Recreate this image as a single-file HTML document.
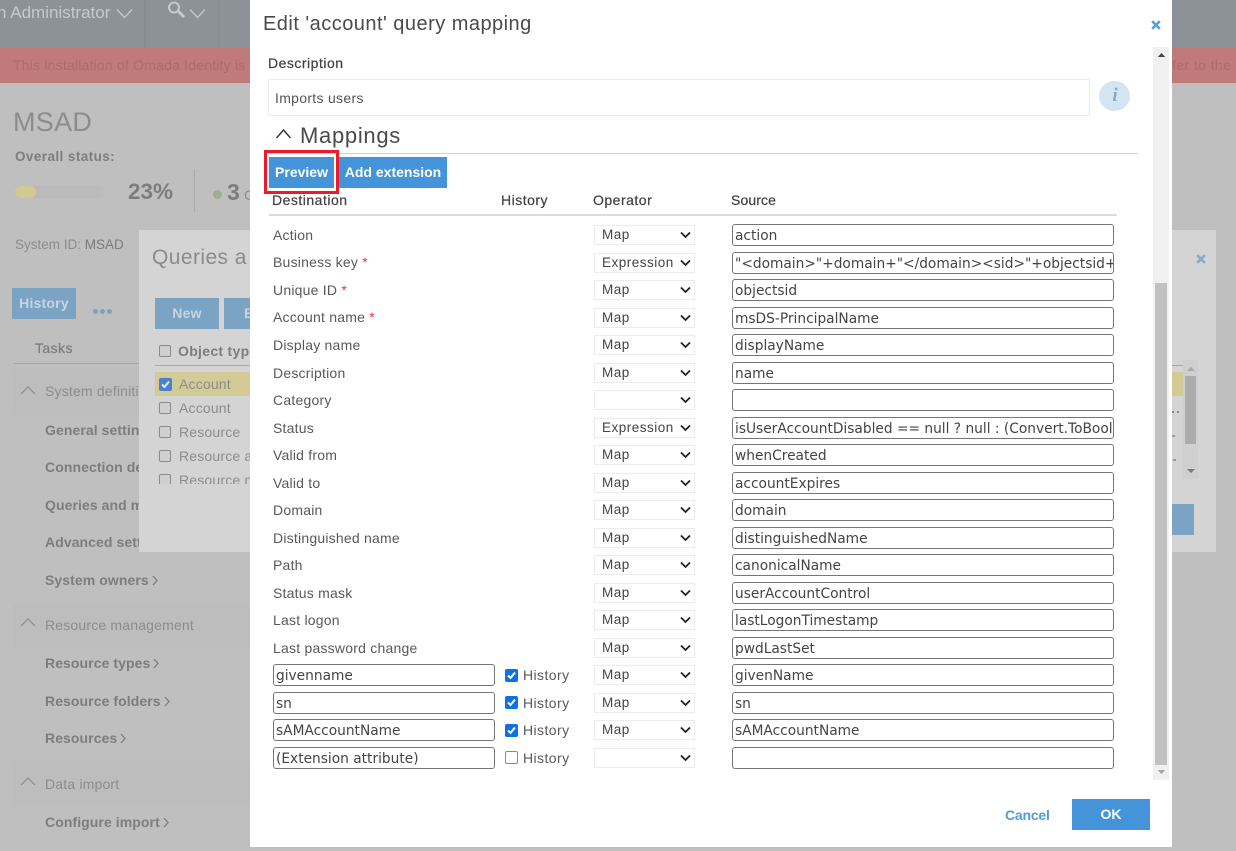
<!DOCTYPE html>
<html><head><meta charset="utf-8"><title>Edit query mapping</title>
<style>
html,body{margin:0;padding:0}
body{width:1236px;height:851px;position:relative;overflow:hidden;background:#bfbfbf;font-family:"Liberation Sans",sans-serif;font-size:14px;color:#444}
.a{position:absolute;white-space:nowrap}
.t{position:absolute;white-space:nowrap;line-height:20px;letter-spacing:.42px}
.b{font-weight:bold}
.g{color:#7d7d7d;letter-spacing:.08px}
.l{color:#8c8c8c;letter-spacing:.18px}
.g svg{margin-left:3px;vertical-align:-1px}
.r{position:absolute;left:273px;color:#595959;line-height:20px;letter-spacing:.22px;white-space:nowrap}
.r i{color:#e8343a;font-style:normal}
.i{position:absolute;box-sizing:border-box;height:22px;border:1px solid #767676;border-radius:3px;background:#fff;color:#444;font:13.75px/22px "DejaVu Sans",sans-serif;padding-left:2px;overflow:hidden;white-space:nowrap}
.s{left:732px;width:382px}
.d{left:273px;width:222px}
.o{position:absolute;left:594px;width:101px;height:20px;box-sizing:border-box;border:1px solid #ececec;background:#fff;color:#444;font:13.5px/18px "Liberation Sans",sans-serif;letter-spacing:.5px;padding-left:7px}
.o svg{position:absolute;left:85px;top:5px}
.c{position:absolute;left:505px;width:13px;height:13px;box-sizing:border-box;border-radius:2px;background:#0f6fe6}
.c svg{display:block}
.u{background:#fff;border:1px solid #8a8a8a}
.h{position:absolute;left:523px;color:#595959;line-height:20px;letter-spacing:.42px}
.k{position:absolute;width:12px;height:12px;box-sizing:border-box;border:1px solid #8a8a8a;border-radius:2px;background:#cfcfcf}
.bt{position:absolute;background:#7aa3c4;color:#c7d5e0;font-weight:bold;text-align:center;line-height:31px;letter-spacing:.2px}
.bm{position:absolute;background:#4394d8;color:#fff;font-weight:bold;text-align:center;height:31px;line-height:31px;top:157px;letter-spacing:0}
.hd{color:#404040;letter-spacing:.5px;-webkit-text-stroke:.2px #404040}
</style></head><body>

<!-- background page -->
<div class="a" style="left:0;top:0;width:1236px;height:48px;background:#8d9299"></div>
<div class="a" style="left:0;top:48px;width:1236px;height:35px;background:#c07a7a"></div>
<div class="a" style="left:144px;top:0;width:2px;height:48px;background:#888d94"></div>
<div class="a" style="left:218px;top:0;width:2px;height:48px;background:#888d94"></div>
<div class="t" style="left:-3px;top:3px;font-size:17px;color:#c6c9cd;letter-spacing:0">n Administrator</div>
<svg class="a" style="left:116px;top:8px" width="18" height="11" fill="none" stroke="#c6c9cd" stroke-width="1.3"><path d="M1 1.5l7.5 8 7.5-8"/></svg>
<svg class="a" style="left:165px;top:0" width="22" height="20" fill="none" stroke="#c6c9cd"><circle cx="9" cy="7.5" r="5" stroke-width="2"/><path d="M13 11l6 6" stroke-width="3"/></svg>
<svg class="a" style="left:189px;top:8px" width="18" height="11" fill="none" stroke="#c6c9cd" stroke-width="1.3"><path d="M1 1.5l7.5 8 7.5-8"/></svg>
<div class="t" style="left:13px;top:55px;color:#a86d6d;letter-spacing:.2px">This installation of Omada Identity is</div>
<div class="t" style="left:1172px;top:55px;color:#a86d6d;letter-spacing:.4px">fer to the</div>
<div class="t" style="left:13px;top:106px;font-size:27px;line-height:32px;color:#8c8c8c;letter-spacing:.3px">MSAD</div>
<div class="t b" style="left:15px;top:147px;font-size:13.5px;color:#7d7d7d">Overall status:</div>
<div class="a" style="left:15px;top:186px;width:90px;height:12px;border-radius:6px;background:#bababa"></div>
<div class="a" style="left:15px;top:186px;width:21px;height:12px;border-radius:6px;background:#d2ca90"></div>
<div class="t b" style="left:128px;top:180px;font-size:22.5px;line-height:24px;color:#7d7d7d;letter-spacing:0">23%</div>
<div class="a" style="left:194px;top:169px;width:1px;height:43px;background:#a9a9a9"></div>
<div class="a" style="left:213px;top:190px;width:9px;height:9px;border-radius:50%;background:#9cb08f"></div>
<div class="t b" style="left:227px;top:180px;font-size:23px;line-height:24px;color:#7d7d7d;letter-spacing:0">3</div>
<div class="t" style="left:244px;top:185px;color:#8c8c8c">G</div>
<div class="t" style="left:15px;top:235px;color:#8c8c8c;font-size:13.5px;letter-spacing:0">System ID: <span style="color:#7b7b7b">MSAD</span></div>

<div class="bt" style="left:12px;top:288px;width:64px;height:31px">History</div>
<div class="a" style="left:93px;top:309px;width:5px;height:5px;border-radius:50%;background:#7aa3c4"></div>
<div class="a" style="left:100px;top:309px;width:5px;height:5px;border-radius:50%;background:#7aa3c4"></div>
<div class="a" style="left:107px;top:309px;width:5px;height:5px;border-radius:50%;background:#7aa3c4"></div>
<div class="t" style="left:35px;top:338px;color:#7d7d7d;-webkit-text-stroke:.25px #7d7d7d">Tasks</div>
<div class="a" style="left:13px;top:363px;width:126px;height:1px;background:#a9a9a9"></div>

<div class="a" style="left:13px;top:369px;width:126px;height:46px;background:#bdbdbd"></div>
<div class="a" style="left:13px;top:604px;width:237px;height:44px;background:#bdbdbd"></div>
<div class="a" style="left:13px;top:761px;width:237px;height:44px;background:#bdbdbd"></div>
<svg class="a" style="left:20px;top:385px" width="16" height="10" fill="none" stroke="#8e8e8e" stroke-width="1.2"><path d="M1 9l7-7 7 7"/></svg>
<svg class="a" style="left:20px;top:617px" width="16" height="10" fill="none" stroke="#8e8e8e" stroke-width="1.2"><path d="M1 9l7-7 7 7"/></svg>
<svg class="a" style="left:20px;top:776px" width="16" height="10" fill="none" stroke="#8e8e8e" stroke-width="1.2"><path d="M1 9l7-7 7 7"/></svg>
<div class="t l" style="left:45px;top:381px">System definition</div>
<div class="t l" style="left:45px;top:615px">Resource management</div>
<div class="t l" style="left:45px;top:774px">Data import</div>
<div class="t b g" style="left:45px;top:420px">General settings</div>
<div class="t b g" style="left:45px;top:457px">Connection details</div>
<div class="t b g" style="left:45px;top:495px">Queries and mappings</div>
<div class="t b g" style="left:45px;top:532px">Advanced settings</div>
<div class="t b g" style="left:45px;top:570px">System owners<svg width="6" height="11" fill="none" stroke="#7d7d7d" stroke-width="1.3"><path d="M1 1l4 4.5-4 4.5"/></svg></div>
<div class="t b g" style="left:45px;top:653px">Resource types<svg width="6" height="11" fill="none" stroke="#7d7d7d" stroke-width="1.3"><path d="M1 1l4 4.5-4 4.5"/></svg></div>
<div class="t b g" style="left:45px;top:691px">Resource folders<svg width="6" height="11" fill="none" stroke="#7d7d7d" stroke-width="1.3"><path d="M1 1l4 4.5-4 4.5"/></svg></div>
<div class="t b g" style="left:45px;top:728px">Resources<svg width="6" height="11" fill="none" stroke="#7d7d7d" stroke-width="1.3"><path d="M1 1l4 4.5-4 4.5"/></svg></div>
<div class="t b g" style="left:45px;top:812px">Configure import<svg width="6" height="11" fill="none" stroke="#7d7d7d" stroke-width="1.3"><path d="M1 1l4 4.5-4 4.5"/></svg></div>

<!-- second dialog -->
<div class="a" style="left:139px;top:230px;width:1077px;height:322px;background:#d4d4d4"></div>
<div class="t" style="left:152px;top:245px;font-size:21px;line-height:26px;color:#8a8a8a">Queries a</div>
<div class="bt" style="left:155px;top:298px;width:64px;height:31px">New</div>
<div class="bt" style="left:224px;top:298px;width:40px;height:31px;text-align:left;text-indent:20px">E</div>
<div class="k" style="left:159px;top:345px"></div>
<div class="t b" style="left:178px;top:341px;color:#7d7d7d;letter-spacing:.3px">Object type</div>
<div class="a" style="left:155px;top:365px;width:100px;height:1px;background:#aaa"></div>
<div class="a" style="left:155px;top:372px;width:100px;height:24px;background:#d2cb96"></div>
<div class="a" style="left:159px;top:378px;width:13px;height:13px;border-radius:2px;background:#4a80d0"><svg width="13" height="13" fill="none" stroke="#e8e8e8" stroke-width="2"><path d="M3 6.5l2.5 2.5 4.5-5.5"/></svg></div>
<div class="t l" style="left:179px;top:374px">Account</div>
<div class="k" style="left:159px;top:402px"></div><div class="t l" style="left:179px;top:398px">Account</div>
<div class="k" style="left:159px;top:426px"></div><div class="t l" style="left:179px;top:422px">Resource</div>
<div class="k" style="left:159px;top:450px"></div><div class="t l" style="left:179px;top:446px">Resource a</div>
<div class="a" style="left:155px;top:470px;width:100px;height:14px;overflow:hidden"><div class="k" style="left:4px;top:4px"></div><div class="t l" style="left:24px;top:0">Resource n</div></div>

<div class="a" style="left:1172px;top:365px;width:11px;height:1px;background:#aaa"></div>
<div class="a" style="left:1172px;top:372px;width:11px;height:24px;background:#d2cb96"></div>
<div class="a" style="left:1172px;top:411px;width:7px;height:2px;border-left:2px dotted #888;border-right:2px dotted #888;box-sizing:border-box"></div>
<div class="a" style="left:1172px;top:435px;width:3px;height:2px;background:#999"></div>
<div class="a" style="left:1173px;top:459px;width:3px;height:2px;background:#999"></div>
<div class="a" style="left:1183px;top:360px;width:15px;height:119px;background:#cfcfcf"></div>
<div class="a" style="left:1185px;top:376px;width:11px;height:68px;background:#acacac"></div>
<svg class="a" style="left:1186px;top:366px" width="10" height="6"><path d="M1 5l4-4 4 4z" fill="#a9a9a9"/></svg>
<svg class="a" style="left:1186px;top:468px" width="10" height="6"><path d="M1 1l4 4 4-4z" fill="#777"/></svg>
<div class="a" style="left:1172px;top:504px;width:22px;height:31px;background:#7aa3c4"></div>
<svg class="a" style="left:1196px;top:254px" width="10" height="10" stroke="#86aac8" stroke-width="2.6"><path d="M1.2 1.2l7.6 7.6M8.8 1.2l-7.6 7.6"/></svg>

<!-- modal -->
<div class="a" style="left:250px;top:0;width:922px;height:847px;background:#fff"></div>
<div class="t" style="left:263px;top:11px;font-size:20px;line-height:26px;color:#4a4a4a;letter-spacing:.47px">Edit 'account' query mapping</div>
<svg class="a" style="left:1151px;top:20px" width="10" height="10" stroke="#5c9fd4" stroke-width="2.6"><path d="M1.2 1.2l7.6 7.6M8.8 1.2l-7.6 7.6"/></svg>

<div class="t hd" style="left:268px;top:53px">Description</div>
<div class="a" style="left:268px;top:79px;width:822px;height:37px;box-sizing:border-box;border:1px solid #ebebeb"></div>
<div class="t" style="left:275px;top:88px;color:#555;letter-spacing:.3px">Imports users</div>
<div class="a" style="left:1099px;top:81px;width:31px;height:30px;border-radius:50%;background:#d3e5f3"></div>
<div class="a" style="left:1109px;top:84px;width:12px;text-align:center;font:italic bold 19px/24px 'Liberation Serif',serif;color:#8aa9c2">i</div>

<svg class="a" style="left:275px;top:128px" width="17" height="12" fill="none" stroke="#333" stroke-width="1.4"><path d="M1.5 10l7-8 7 8"/></svg>
<div class="t" style="left:300px;top:122px;font-size:22px;line-height:28px;color:#4a4a4a;letter-spacing:.7px">Mappings</div>
<div class="a" style="left:268px;top:153px;width:870px;height:1px;background:#d3d3d3"></div>

<div class="bm" style="left:269px;width:65px">Preview</div>
<div class="bm" style="left:339px;width:108px">Add extension</div>
<div class="a" style="left:264px;top:150px;width:75px;height:44px;box-sizing:border-box;border:3px solid #ea1c2c"></div>

<div class="t hd" style="left:272px;top:190px">Destination</div>
<div class="t hd" style="left:501px;top:190px">History</div>
<div class="t hd" style="left:593px;top:190px">Operator</div>
<div class="t hd" style="left:731px;top:190px;letter-spacing:.1px">Source</div>
<div class="a" style="left:269px;top:214px;width:848px;height:2px;background:#dcdcdc"></div>

<div class="r" style="top:225px">Action</div>
<div class="r" style="top:252px">Business key <i>*</i></div>
<div class="r" style="top:280px">Unique ID <i>*</i></div>
<div class="r" style="top:307px">Account name <i>*</i></div>
<div class="r" style="top:335px">Display name</div>
<div class="r" style="top:363px">Description</div>
<div class="r" style="top:390px">Category</div>
<div class="r" style="top:418px">Status</div>
<div class="r" style="top:445px">Valid from</div>
<div class="r" style="top:473px">Valid to</div>
<div class="r" style="top:500px">Domain</div>
<div class="r" style="top:528px">Distinguished name</div>
<div class="r" style="top:555px">Path</div>
<div class="r" style="top:583px">Status mask</div>
<div class="r" style="top:610px">Last logon</div>
<div class="r" style="top:638px">Last password change</div>

<div class="i d" style="top:664px">givenname</div>
<div class="i d" style="top:692px">sn</div>
<div class="i d" style="top:719px">sAMAccountName</div>
<div class="i d" style="top:747px">(Extension attribute)</div>

<div class="c" style="top:669px"><svg width="13" height="13" fill="none" stroke="#fff" stroke-width="2"><path d="M3 6.5l2.5 2.5 4.5-5.5"/></svg></div>
<div class="c" style="top:696px"><svg width="13" height="13" fill="none" stroke="#fff" stroke-width="2"><path d="M3 6.5l2.5 2.5 4.5-5.5"/></svg></div>
<div class="c" style="top:724px"><svg width="13" height="13" fill="none" stroke="#fff" stroke-width="2"><path d="M3 6.5l2.5 2.5 4.5-5.5"/></svg></div>
<div class="c u" style="top:751px"></div>
<div class="h" style="top:665px">History</div>
<div class="h" style="top:693px">History</div>
<div class="h" style="top:720px">History</div>
<div class="h" style="top:748px">History</div>

<div class="o" style="top:225px">Map<svg width="11" height="8" fill="none" stroke="#222" stroke-width="1.8"><path d="M1 1.5l4.5 4.5 4.5-4.5"/></svg></div>
<div class="o" style="top:253px">Expression<svg width="11" height="8" fill="none" stroke="#222" stroke-width="1.8"><path d="M1 1.5l4.5 4.5 4.5-4.5"/></svg></div>
<div class="o" style="top:280px">Map<svg width="11" height="8" fill="none" stroke="#222" stroke-width="1.8"><path d="M1 1.5l4.5 4.5 4.5-4.5"/></svg></div>
<div class="o" style="top:308px">Map<svg width="11" height="8" fill="none" stroke="#222" stroke-width="1.8"><path d="M1 1.5l4.5 4.5 4.5-4.5"/></svg></div>
<div class="o" style="top:335px">Map<svg width="11" height="8" fill="none" stroke="#222" stroke-width="1.8"><path d="M1 1.5l4.5 4.5 4.5-4.5"/></svg></div>
<div class="o" style="top:363px">Map<svg width="11" height="8" fill="none" stroke="#222" stroke-width="1.8"><path d="M1 1.5l4.5 4.5 4.5-4.5"/></svg></div>
<div class="o" style="top:390px"><svg width="11" height="8" fill="none" stroke="#222" stroke-width="1.8"><path d="M1 1.5l4.5 4.5 4.5-4.5"/></svg></div>
<div class="o" style="top:418px">Expression<svg width="11" height="8" fill="none" stroke="#222" stroke-width="1.8"><path d="M1 1.5l4.5 4.5 4.5-4.5"/></svg></div>
<div class="o" style="top:445px">Map<svg width="11" height="8" fill="none" stroke="#222" stroke-width="1.8"><path d="M1 1.5l4.5 4.5 4.5-4.5"/></svg></div>
<div class="o" style="top:473px">Map<svg width="11" height="8" fill="none" stroke="#222" stroke-width="1.8"><path d="M1 1.5l4.5 4.5 4.5-4.5"/></svg></div>
<div class="o" style="top:500px">Map<svg width="11" height="8" fill="none" stroke="#222" stroke-width="1.8"><path d="M1 1.5l4.5 4.5 4.5-4.5"/></svg></div>
<div class="o" style="top:528px">Map<svg width="11" height="8" fill="none" stroke="#222" stroke-width="1.8"><path d="M1 1.5l4.5 4.5 4.5-4.5"/></svg></div>
<div class="o" style="top:555px">Map<svg width="11" height="8" fill="none" stroke="#222" stroke-width="1.8"><path d="M1 1.5l4.5 4.5 4.5-4.5"/></svg></div>
<div class="o" style="top:583px">Map<svg width="11" height="8" fill="none" stroke="#222" stroke-width="1.8"><path d="M1 1.5l4.5 4.5 4.5-4.5"/></svg></div>
<div class="o" style="top:610px">Map<svg width="11" height="8" fill="none" stroke="#222" stroke-width="1.8"><path d="M1 1.5l4.5 4.5 4.5-4.5"/></svg></div>
<div class="o" style="top:638px">Map<svg width="11" height="8" fill="none" stroke="#222" stroke-width="1.8"><path d="M1 1.5l4.5 4.5 4.5-4.5"/></svg></div>
<div class="o" style="top:665px">Map<svg width="11" height="8" fill="none" stroke="#222" stroke-width="1.8"><path d="M1 1.5l4.5 4.5 4.5-4.5"/></svg></div>
<div class="o" style="top:693px">Map<svg width="11" height="8" fill="none" stroke="#222" stroke-width="1.8"><path d="M1 1.5l4.5 4.5 4.5-4.5"/></svg></div>
<div class="o" style="top:720px">Map<svg width="11" height="8" fill="none" stroke="#222" stroke-width="1.8"><path d="M1 1.5l4.5 4.5 4.5-4.5"/></svg></div>
<div class="o" style="top:748px"><svg width="11" height="8" fill="none" stroke="#222" stroke-width="1.8"><path d="M1 1.5l4.5 4.5 4.5-4.5"/></svg></div>

<div class="i s" style="top:224px">action</div>
<div class="i s" style="top:252px">"&lt;domain&gt;"+domain+"&lt;/domain&gt;&lt;sid&gt;"+objectsid+"&lt;/sid&gt;"</div>
<div class="i s" style="top:279px">objectsid</div>
<div class="i s" style="top:307px">msDS-PrincipalName</div>
<div class="i s" style="top:334px">displayName</div>
<div class="i s" style="top:362px">name</div>
<div class="i s" style="top:389px"></div>
<div class="i s" style="top:417px">isUserAccountDisabled == null ? null : (Convert.ToBoolean</div>
<div class="i s" style="top:444px">whenCreated</div>
<div class="i s" style="top:472px">accountExpires</div>
<div class="i s" style="top:499px">domain</div>
<div class="i s" style="top:527px">distinguishedName</div>
<div class="i s" style="top:554px">canonicalName</div>
<div class="i s" style="top:582px">userAccountControl</div>
<div class="i s" style="top:609px">lastLogonTimestamp</div>
<div class="i s" style="top:637px">pwdLastSet</div>
<div class="i s" style="top:664px">givenName</div>
<div class="i s" style="top:692px">sn</div>
<div class="i s" style="top:719px">sAMAccountName</div>
<div class="i s" style="top:747px"></div>

<!-- modal scrollbar -->
<div class="a" style="left:1153px;top:47px;width:16px;height:733px;background:#f0f0f0"></div>
<div class="a" style="left:1155px;top:283px;width:12px;height:482px;background:#c1c1c1"></div>
<svg class="a" style="left:1157px;top:52px" width="9" height="6"><path d="M.8 5l3.7-4 3.7 4z" fill="#444"/></svg>
<svg class="a" style="left:1157px;top:769px" width="9" height="6"><path d="M.8 1l3.7 4 3.7-4z" fill="#a3a3a3"/></svg>

<div class="t b" style="left:1005px;top:805px;color:#4f9dd9;letter-spacing:-.2px">Cancel</div>
<div class="bm" style="left:1072px;top:799px;width:78px;line-height:31px">OK</div>
</body></html>
